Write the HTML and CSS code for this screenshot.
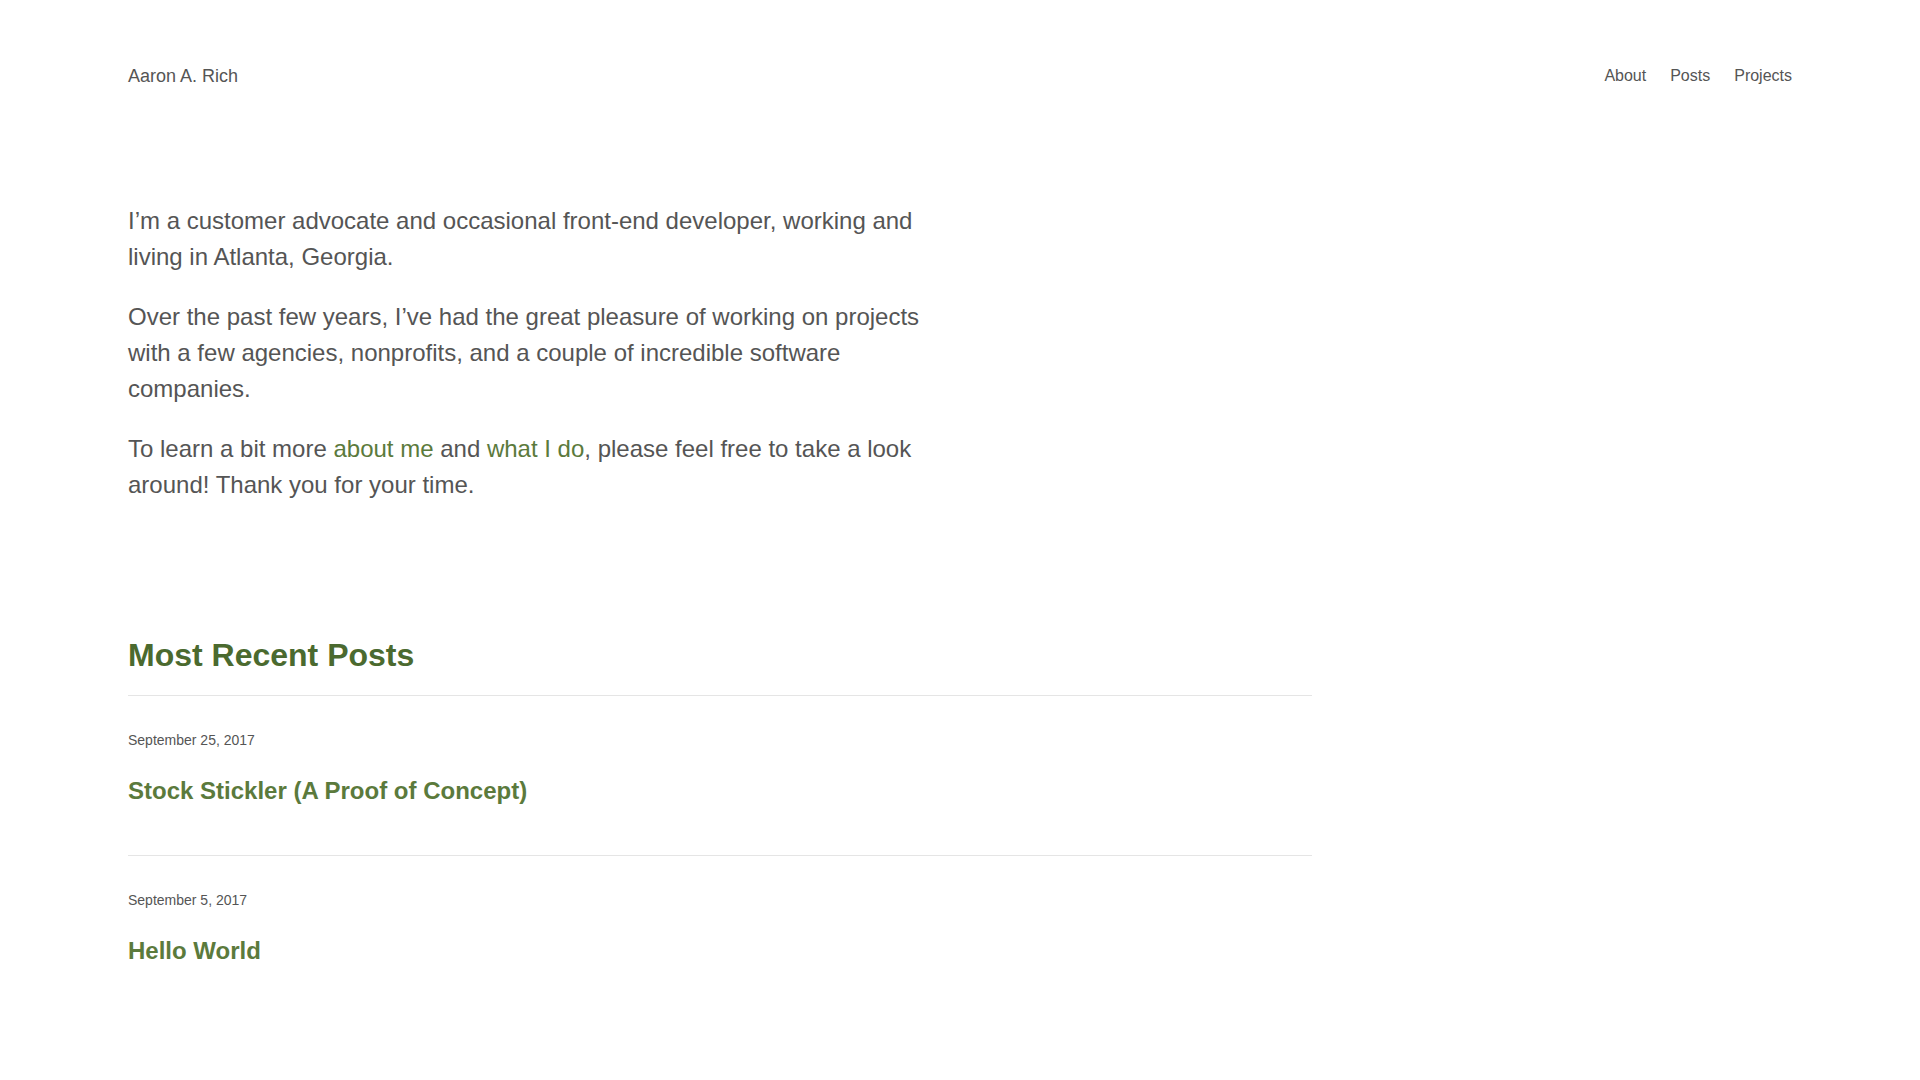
FILE: index.html
```html
<!DOCTYPE html>
<html lang="en">
<head>
  <meta charset="UTF-8" />
  <meta name="viewport" content="width=device-width, initial-scale=1" />
  <title>Aaron A. Rich</title>
  <link rel="stylesheet" href="styles.css">
</head>
<body>
  <div class="site">
    <header class="site-header">
      <a class="brand" href="#">Aaron A. Rich</a>
      <nav class="site-nav">
        <a href="#">About</a>
        <a href="#">Posts</a>
        <a href="#">Projects</a>
      </nav>
    </header>

    <section class="intro">
      <p>I’m a customer advocate and occasional front-end developer, working and living in Atlanta, Georgia.</p>
      <p>Over the past few years, I’ve had the great pleasure of working on projects with a few agencies, nonprofits, and a couple of incredible software companies.</p>
      <p>To learn a bit more <a href="#">about me</a> and <a href="#">what I do</a>, please feel free to take a look around! Thank you for your time.</p>
    </section>

    <section class="recent">
      <h2 class="recent-title">Most Recent Posts</h2>
      <article class="post">
        <div class="post-date">September 25, 2017</div>
        <h3 class="post-title"><a href="#">Stock Stickler (A Proof of Concept)</a></h3>
      </article>
      <article class="post">
        <div class="post-date">September 5, 2017</div>
        <h3 class="post-title"><a href="#">Hello World</a></h3>
      </article>
    </section>
  </div>
</body>
</html>
```

FILE: styles.css
```css
body {
  margin: 0;
  font-family: "Liberation Sans", Arial, sans-serif;
  background-color: #fff;
  color: #555;
}

a {
  text-decoration: none;
}

.site {
  padding: 63px 128px 0;
}

.site-header {
  display: flex;
  justify-content: space-between;
  align-items: center;
}

.brand {
  font-size: 18px;
  line-height: 27px;
  color: #555;
}

.site-nav {
  display: flex;
  gap: 24px;
  margin-top: -2px;
}

.site-nav a {
  font-size: 16px;
  line-height: 24px;
  color: #555;
}

.intro {
  max-width: 800px;
  padding-top: 113px;
}

.intro p {
  font-size: 24px;
  line-height: 36px;
  margin: 0 0 24px;
}

.intro p:last-child {
  margin-bottom: 0;
}

.intro a {
  color: #5b7a3c;
}

.recent {
  max-width: 1184px;
  padding-top: 132px;
}

.recent-title {
  font-size: 32px;
  line-height: 40px;
  font-weight: bold;
  color: #4b6a2f;
  margin: 0;
  padding-bottom: 20px;
}

.post {
  border-top: 1px solid #e5e5e5;
  padding: 34px 0 46px;
}

.post-date {
  font-size: 14px;
  line-height: 21px;
  color: #555;
  margin-bottom: 22px;
}

.post-title {
  font-size: 24px;
  line-height: 36px;
  font-weight: bold;
  margin: 0;
}

.post-title a {
  color: #5b7a3c;
}
```
